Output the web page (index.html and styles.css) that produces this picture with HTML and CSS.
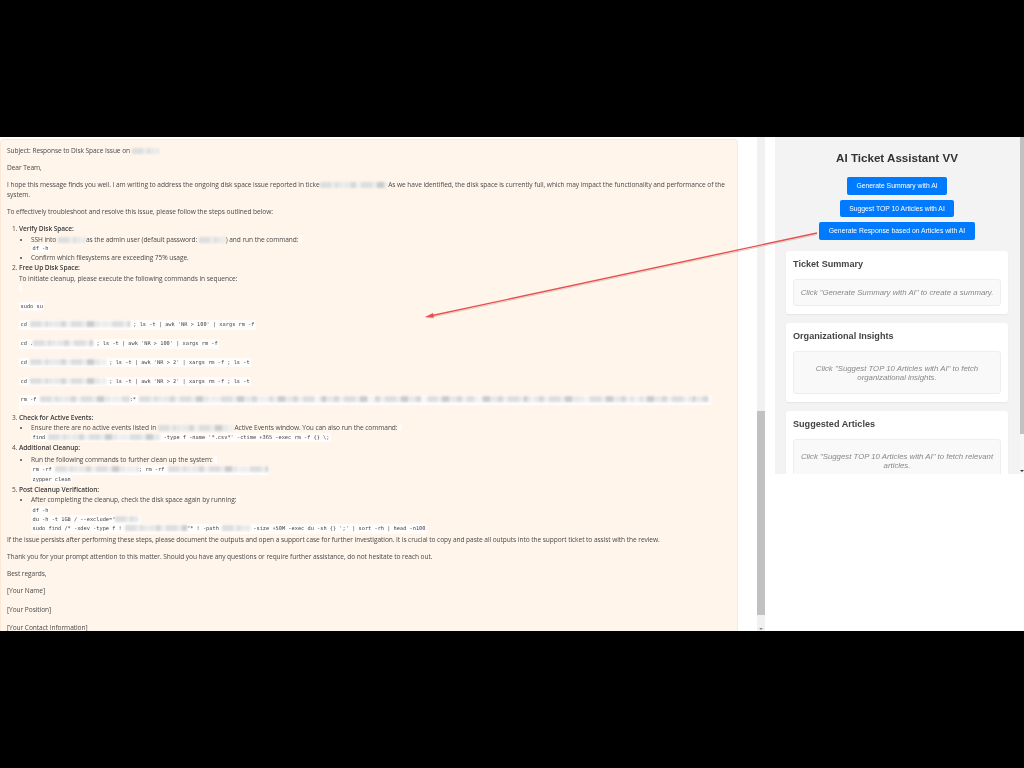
FILE: index.html
```html
<!DOCTYPE html>
<html lang="en">
<head>
<meta charset="utf-8">
<title>AI Ticket Assistant VV</title>
<link rel="stylesheet" href="styles.css">
</head>
<body>
<div class="band"></div>
<main class="stage">
  <section class="left">
    <article class="response">
      <p>Subject: Response to Disk Space Issue on <span class="rd r27"></span></p>
      <p>Dear Team,</p>
      <p>I hope this message finds you well. I am writing to address the ongoing disk space issue reported in ticke<span class="rd r67"></span> As we have identified, the disk space is currently full, which may impact the functionality and performance of the system.</p>
      <p>To effectively troubleshoot and resolve this issue, please follow the steps outlined below:</p>
      <ol>
        <li><b>Verify Disk Space:</b>
          <ul>
            <li>SSH into <span class="rd r28"></span>as the admin user (default password: <span class="rd r27"></span>) and run the command:<code class="blank"></code><code class="pull">df -h</code></li>
            <li>Confirm which filesystems are exceeding 75% usage.</li>
          </ul>
        </li>
        <li><b>Free Up Disk Space:</b><br>To initiate cleanup, please execute the following commands in sequence:
          <div class="cmds">
            <code class="blank"></code>
            <code>sudo su</code>
            <code>cd <span class="rd r100"></span> ; ls -t | awk 'NR &gt; 100' | xargs rm -f</code>
            <code>cd .<span class="rd r60"></span> ; ls -t | awk 'NR &gt; 100' | xargs rm -f</code>
            <code>cd <span class="rd r76"></span> ; ls -t | awk 'NR &gt; 2' | xargs rm -f ; ls -t</code>
            <code>cd <span class="rd r76"></span> ; ls -t | awk 'NR &gt; 2' | xargs rm -f ; ls -t</code>
            <code>rm -f <span class="rd r90"></span>:* <span class="rd r570"></span></code>
            <code class="blank last"></code>
          </div>
        </li>
        <li><b>Check for Active Events:</b>
          <ul>
            <li>Ensure there are no active events listed in <span class="rd r75"></span> Active Events window. You can also run the command:<code class="blank"></code><code>find <span class="rd r112"></span> -type f -name '*.csv*' -ctime +365 -exec rm -f {} \;</code></li>
          </ul>
        </li>
        <li class="step"><b>Additional Cleanup:</b>
          <ul class="spaced">
            <li>Run the following commands to further clean up the system:<code class="blank"></code><code>rm -rf <span class="rd r84"></span>; rm -rf <span class="rd r100"></span></code><code>zypper clean</code></li>
          </ul>
        </li>
        <li class="step"><b>Post Cleanup Verification:</b>
          <ul>
            <li>After completing the cleanup, check the disk space again by running:<code class="blank"></code><code>df -h</code><code>du -h -t 1GB / --exclude="<span class="rd r24"></span></code><code>sudo find /* -xdev -type f ! <span class="rd r62"></span>"* ! -path <span class="rd r28"></span> -size +50M -exec du -sh {} ';' | sort -rh | head -n100</code></li>
          </ul>
        </li>
      </ol>
      <p>If the issue persists after performing these steps, please document the outputs and open a support case for further investigation. It is crucial to copy and paste all outputs into the support ticket to assist with the review.</p>
      <p>Thank you for your prompt attention to this matter. Should you have any questions or require further assistance, do not hesitate to reach out.</p>
      <p>Best regards,</p>
      <p class="sig">[Your Name]</p>
      <p class="sig">[Your Position]</p>
      <p class="sig">[Your Contact Information]</p>
    </article>
  </section>
  <div class="scroll-main"><div class="thumb-main"></div><div class="arrow-down"></div></div>
  <div class="gutter"></div>
  <aside class="side-wrap">
    <div class="side">
      <div class="assistant">
        <h1>AI Ticket Assistant VV</h1>
        <div class="actions">
          <button type="button">Generate Summary with AI</button>
          <button type="button">Suggest TOP 10 Articles with AI</button>
          <button type="button">Generate Response based on Articles with AI</button>
        </div>
        <div class="card">
          <h2>Ticket Summary</h2>
          <div class="hint one">Click "Generate Summary with AI" to create a summary.</div>
        </div>
        <div class="card">
          <h2>Organizational Insights</h2>
          <div class="hint">Click "Suggest TOP 10 Articles with AI" to fetch organizational insights.</div>
        </div>
        <div class="card">
          <h2>Suggested Articles</h2>
          <div class="hint">Click "Suggest TOP 10 Articles with AI" to fetch relevant articles.</div>
        </div>
      </div>
      <div class="scroll-side"><div class="thumb-side"></div><div class="arrow-down dark"></div></div>
    </div>
  </aside>
</main>
<div class="band"></div>
<svg class="arrow" width="1024" height="768" viewBox="0 0 1024 768" aria-hidden="true">
  <line class="arrow-shadow" x1="817" y1="234.500" x2="430" y2="317.500"/>
  <polygon class="arrow-shadow-head" points="425,318 433,314 434,318.500"/>
  <line class="arrow-line" x1="817" y1="233" x2="430" y2="316"/>
  <polygon class="arrow-head" points="425,317 433,313 434,317.500"/>
</svg>
</body>
</html>
```

FILE: styles.css
```css
* { box-sizing: border-box; }
html, body { margin: 0; height: 100%; background: #000; overflow: hidden; }
body { position: relative; font-family: "Open Sans", "Noto Sans", sans-serif; }
.band { height: 137px; background: #000; }
.stage { display: flex; height: 494px; background: #fff; }

/* left column */
.left { width: 757px; padding: 2px 19px 0 0; overflow: hidden; background: #fff; }
.response {
  height: 520px;
  padding: 5.500px 6px;
  background: #fff5eb;
  border: 1px solid #fde8d8;
  border-radius: 3px;
  font-size: 6.600px;
  letter-spacing: -.07px;
  line-height: 10.600px;
  color: #4a4a4a;
  filter: blur(.3px);
}
.response p { margin: 0 0 6.500px; }
.response p.sig { margin-bottom: 8px; }
.response ol { margin: 0 0 1px; padding: 0 0 0 12px; line-height: 10.200px; }
.response ol > li.step { margin-top: 1px; }
.response ul { margin: 0; padding: 0 0 0 12px; list-style: disc; }
.response ul.spaced { margin-top: 1.500px; }
.response b { font-weight: 600; color: #3a3a3a; }
.response code {
  display: block;
  width: fit-content;
  padding: 0 1.500px;
  background: #fffdfb;
  border-radius: 1.500px;
  font-family: "DejaVu Sans Mono", "Liberation Mono", monospace;
  font-size: 5.300px;
  letter-spacing: 0;
  line-height: 9.400px;
  color: #444;
  white-space: nowrap;
}
.response code.blank { display: inline-block; width: 3px; height: 8px; margin-left: 1px; vertical-align: top; }
.response code.pull { margin-top: -1px; }
.cmds { display: flex; flex-direction: column; align-items: flex-start; gap: 9.300px; }
.response .cmds code.blank { margin: .5px 0 0; }
.response .cmds code.last { margin: -9.300px 0 0; }

/* blurred redactions */
.rd {
  display: inline-block;
  height: 6px;
  vertical-align: -1px;
  background:
    repeating-linear-gradient(90deg, rgba(255, 255, 255, 0) 0 17px, rgba(255, 255, 255, .55) 17px 24px, rgba(255, 255, 255, 0) 24px 53px),
    repeating-linear-gradient(90deg, #dcdedf 0 11px, #ebebe9 11px 16px, #c9cccd 16px 23px, #e8e8e6 23px 31px, #d5d7d8 31px 36px, #f1efec 36px 41px);
  filter: blur(1.200px);
}
.r24 { width: 24px; }
.r27 { width: 27px; }
.r28 { width: 28px; }
.r60 { width: 60px; }
.r62 { width: 62px; }
.r67 { width: 67px; }
.r75 { width: 75px; }
.r76 { width: 76px; }
.r84 { width: 84px; }
.r90 { width: 90px; }
.r100 { width: 100px; }
.r112 { width: 112px; }
.r570 { width: 570px; }

/* page scrollbar */
.scroll-main { position: relative; width: 8px; padding-top: 274px; background: #f1f1f1; }
.thumb-main { height: 204px; background: #c1c1c1; }
.gutter { width: 10px; background: #fff; }
.arrow-down {
  position: absolute;
  left: 50%;
  bottom: 1px;
  margin-left: -2px;
  border: 2px solid transparent;
  border-top: 2.500px solid #8a8a8a;
  border-bottom: 0;
}
.arrow-down.dark { bottom: 2px; border-top-color: #333; }

/* assistant */
.side-wrap { width: 249px; background: #fff; }
.side { display: flex; height: 337px; background: #f3f3f3; overflow: hidden; }
.assistant { width: 245px; padding: 14px 12px 0 11px; font-family: "Liberation Sans", Arial, sans-serif; filter: blur(.3px); }
.assistant h1 {
  margin: 0 0 12px;
  font-size: 11.600px;
  line-height: 14px;
  font-weight: 700;
  text-align: center;
  color: #333;
}
.actions { display: flex; flex-direction: column; align-items: center; gap: 5px; margin-bottom: 11.500px; }
.actions button {
  height: 17.500px;
  padding: 0 9.500px;
  border: 0;
  border-radius: 2px;
  background: #007bff;
  color: #fff;
  font-family: inherit;
  font-size: 6.800px;
}
.card {
  margin-bottom: 9px;
  padding: 7px 7px 8px;
  background: #fff;
  border-radius: 3px;
  box-shadow: 0 1px 2px rgba(0, 0, 0, .06);
}
.card h2 { margin: 0 0 9px; font-size: 9.100px; line-height: 12px; font-weight: 700; color: #444; }
.hint {
  padding: 11.500px 4px;
  background: #f9f9f9;
  border: 1px solid #eee;
  border-radius: 3px;
  font-size: 7.800px;
  line-height: 9px;
  font-style: italic;
  text-align: center;
  color: #888;
}
.hint.one { padding: 8px 4px; }
.scroll-side { position: relative; width: 4px; background: #f6f6f6; }
.thumb-side { height: 297px; background: #c1c1c1; }

/* annotation */
.arrow { position: absolute; left: 0; top: 0; pointer-events: none; }
.arrow-line { stroke: #e8504f; stroke-width: 1.400px; }
.arrow-head { fill: #e8504f; }
.arrow-shadow { stroke: #b9a9a0; stroke-width: 1px; opacity: .5; }
.arrow-shadow-head { fill: #b9a9a0; opacity: .5; }
```
